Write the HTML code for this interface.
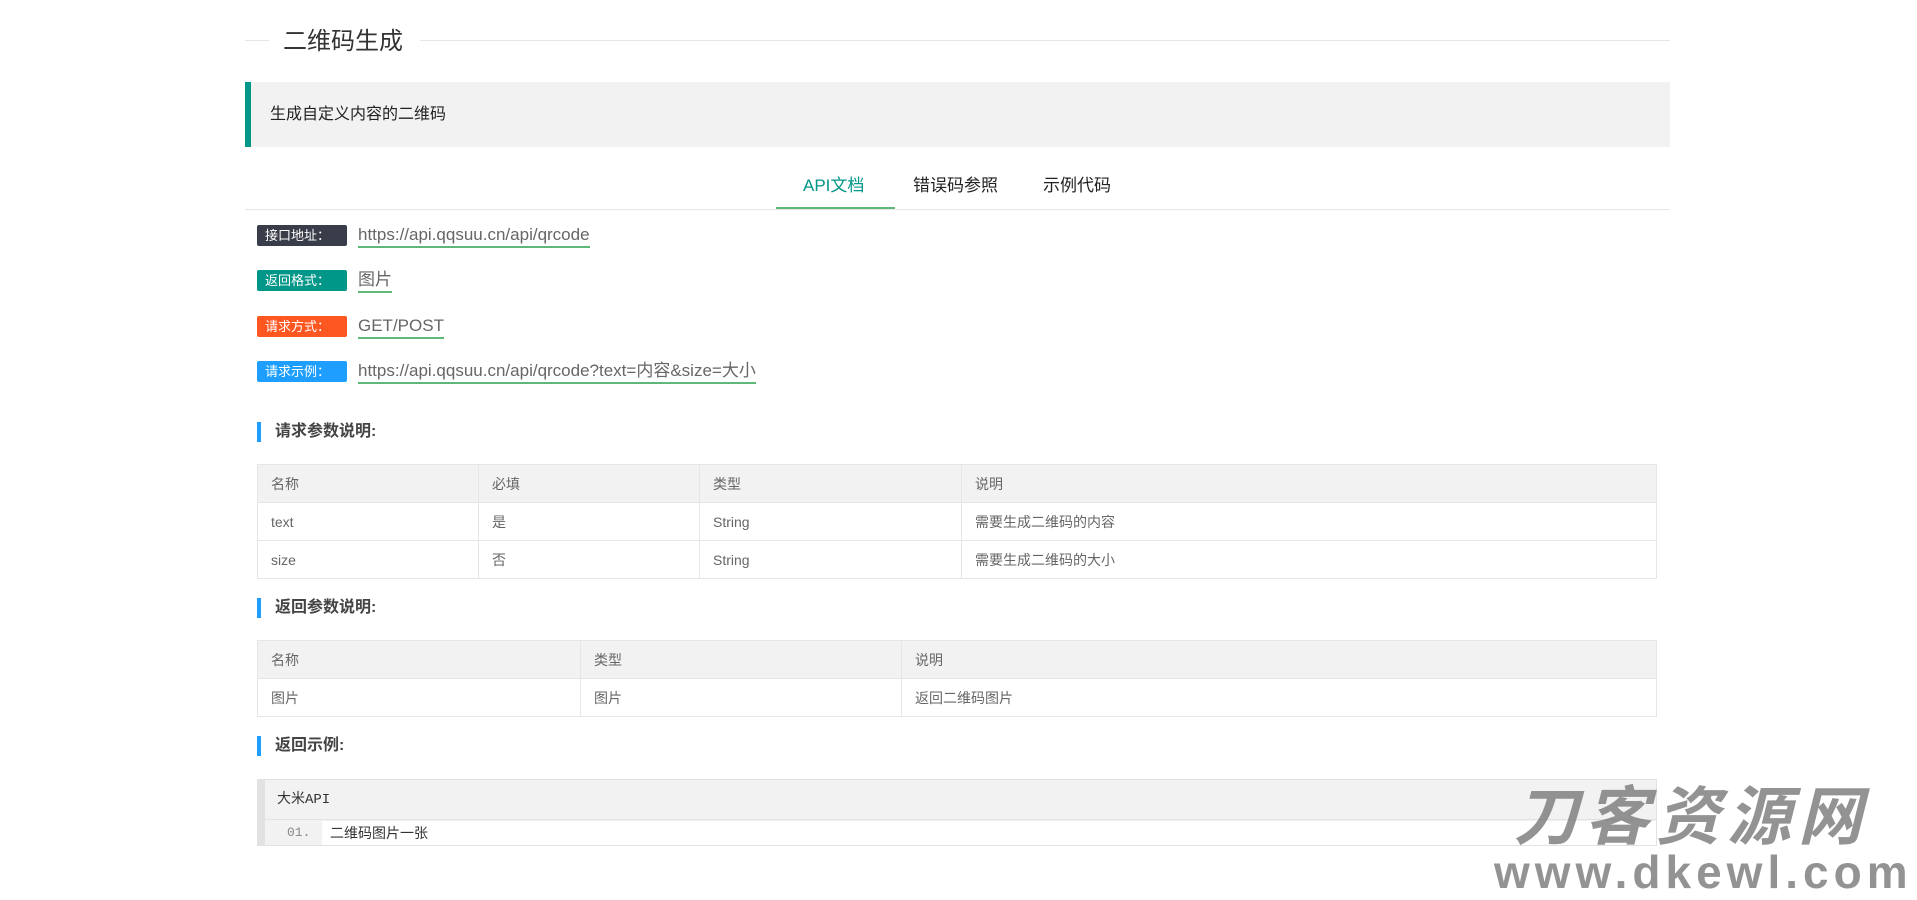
<!DOCTYPE html>
<html><head><meta charset="utf-8"><style>
*{margin:0;padding:0;box-sizing:border-box}
body{width:1917px;height:900px;background:#fff;font-family:"Liberation Sans","Noto Sans CJK SC",sans-serif;position:relative;overflow:hidden;color:#333}
.a{position:absolute}
.badge{position:absolute;left:257px;width:90px;height:21px;border-radius:2px;color:#fff;font-size:13px;line-height:21px;padding-left:8px}
.link{position:absolute;left:358px;font-size:17px;color:#666;border-bottom:2px solid #5fb878;line-height:22px}
.sec{position:absolute;left:257px;border-left:4px solid #1e9fff;padding-left:14px;font-size:16px;font-weight:bold;color:#444;line-height:20px;height:20px}
table{position:absolute;left:257px;width:1400px;border-collapse:collapse;font-size:14px;color:#666}
td{border:1px solid #e6e6e6;height:38px;padding-left:13px;padding-top:0}
tr.h td{background:#f2f2f2}
</style></head><body>
<div class="a" style="left:245px;top:40px;width:24px;height:1px;background:#e6e6e6"></div>
<div class="a" style="left:420px;top:40px;width:1250px;height:1px;background:#e6e6e6"></div>
<div class="a" style="left:283px;top:27px;font-size:24px;line-height:30px;color:#333">二维码生成</div>
<div class="a" style="left:245px;top:82px;width:1425px;height:65px;background:#f2f2f2;border-left:6px solid #009688"></div>
<div class="a" style="left:270px;top:104px;font-size:16px;line-height:22px;color:#222">生成自定义内容的二维码</div>
<div class="a" style="left:245px;top:209px;width:1425px;height:1px;background:#e6e6e6"></div>
<div class="a" style="left:776px;top:207px;width:119px;height:2px;background:#5fb878"></div>
<div class="a" style="left:803px;top:175px;font-size:17px;color:#009688;line-height:22px">API文档</div>
<div class="a" style="left:913px;top:175px;font-size:17px;color:#222;line-height:22px">错误码参照</div>
<div class="a" style="left:1043px;top:175px;font-size:17px;color:#222;line-height:22px">示例代码</div>

<div class="badge" style="top:225px;background:#393d49">接口地址：</div>
<div class="link" style="top:224px">https://api.qqsuu.cn/api/qrcode</div>
<div class="badge" style="top:270px;background:#009688">返回格式：</div>
<div class="link" style="top:269px">图片</div>
<div class="badge" style="top:316px;background:#ff5722">请求方式：</div>
<div class="link" style="top:315px">GET/POST</div>
<div class="badge" style="top:361px;background:#1e9fff">请求示例：</div>
<div class="link" style="top:360px">https://api.qqsuu.cn/api/qrcode?text=内容&amp;size=大小</div>

<div class="sec" style="top:422px">请求参数说明:</div>
<table style="top:464px">
<tr class="h"><td style="width:221px">名称</td><td style="width:221px">必填</td><td style="width:262px">类型</td><td>说明</td></tr>
<tr><td>text</td><td>是</td><td>String</td><td>需要生成二维码的内容</td></tr>
<tr><td>size</td><td>否</td><td>String</td><td>需要生成二维码的大小</td></tr>
</table>
<div class="sec" style="top:598px">返回参数说明:</div>
<table style="top:640px">
<tr class="h"><td style="width:323px">名称</td><td style="width:321px">类型</td><td>说明</td></tr>
<tr><td>图片</td><td>图片</td><td>返回二维码图片</td></tr>
</table>
<div class="sec" style="top:736px">返回示例:</div>
<div class="a" style="left:257px;top:779px;width:1400px;height:67px;border:1px solid #e2e2e2;border-left:8px solid #e2e2e2;background:#f2f2f2">
<div style="height:40px;border-bottom:1px solid #e2e2e2;padding-left:12px;line-height:40px;font-size:14px;color:#333;font-family:'Liberation Mono','Noto Sans CJK SC',monospace">大米API</div>
<div style="position:absolute;left:57px;top:41px;right:0;bottom:0;background:#fff;padding-left:8px;line-height:24px;font-size:14px;color:#333">二维码图片一张</div>
<div style="position:absolute;left:22px;top:41px;line-height:24px;font-size:13px;color:#888;font-family:'Liberation Mono',monospace">01.</div>
</div>
<div class="a" style="left:1514px;top:772px;font-size:64px;font-weight:bold;font-style:italic;color:rgba(120,120,120,0.8);letter-spacing:7px;line-height:80px;font-family:'Noto Sans CJK SC',sans-serif">刀客资源网</div>
<div class="a" style="left:1494px;top:846px;font-size:46px;font-weight:bold;color:rgba(120,120,120,0.8);letter-spacing:5px;line-height:52px">www.dkewl.com</div>
</body></html>
